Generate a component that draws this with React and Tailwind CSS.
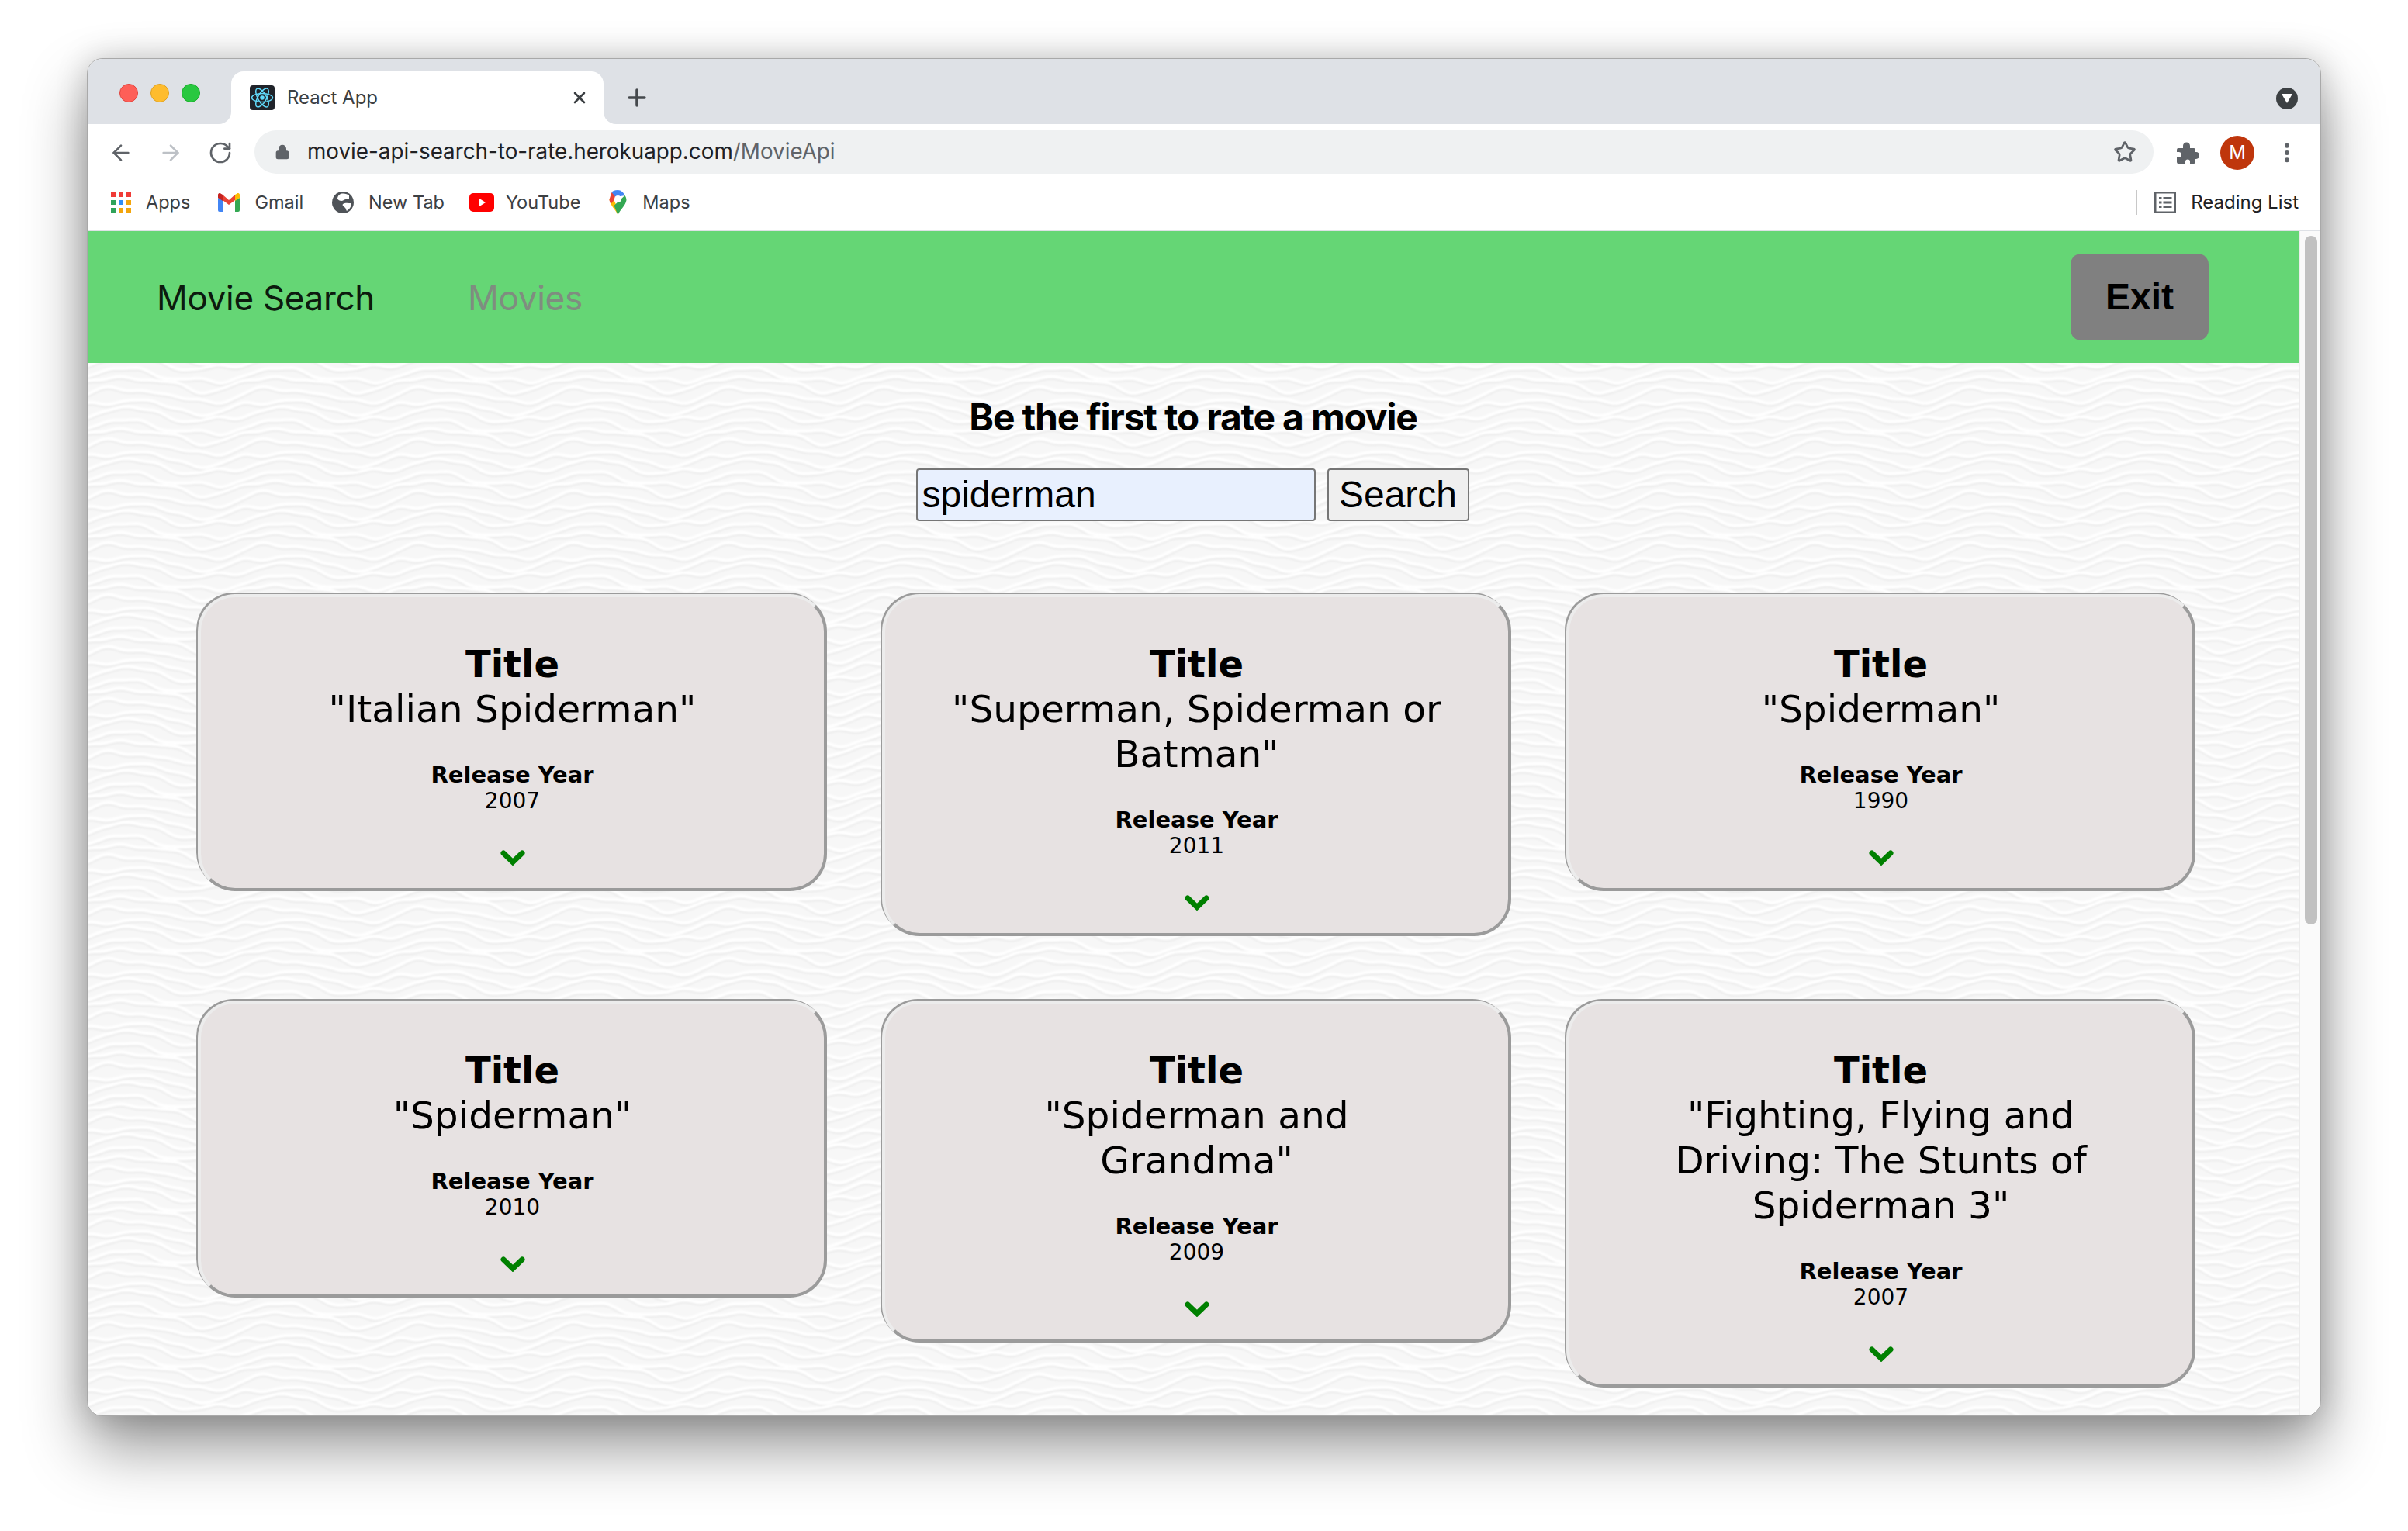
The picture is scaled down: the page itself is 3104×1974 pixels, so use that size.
import React, { useMemo } from "react";
import { ArrowLeft, ArrowRight, RotateCw, Plus, X, Star, Lock, MoreVertical } from "lucide-react";

const MOVIES = [
  ["Italian Spiderman", "2007"],
  ["Superman, Spiderman or Batman", "2011"],
  ["Spiderman", "1990"],
  ["Spiderman", "2010"],
  ["Spiderman and Grandma", "2009"],
  ["Fighting, Flying and Driving: The Stunts of Spiderman 3", "2007"],
];

function Waves() {
  const lines = useMemo(() => {
    const A = [0.3, 2.1, 4.0, 5.2, 1.2];
    const B = [1.7, 3.6, 0.5, 2.6, 4.9];
    const O = [0, 1.5, -1, 2, -1.5];
    const out = [];
    for (let i = -3; i < 9; i++) {
      const k = ((i % 5) + 5) % 5;
      let d = "";
      for (let x = -10; x <= 210; x += 4) {
        const t = (2 * Math.PI * (x - 50)) / 200;
        const v =
          -8.5 * Math.cos(t) +
          2.8 * Math.sin(2 * t + A[k]) +
          1.6 * Math.sin(3 * t + B[k]) +
          0.8 * Math.sin(5 * t + A[k] + B[k]);
        d += (x === -10 ? "M" : "L") + x + " " + (i * 13.4 + O[k] + v).toFixed(1);
      }
      out.push(d);
    }
    return out;
  }, []);
  return (
    <svg className="absolute inset-0 w-full h-full" aria-hidden="true">
      <defs>
        <filter id="soft" x="-10%" y="-10%" width="120%" height="120%">
          <feGaussianBlur stdDeviation="1" />
        </filter>
        <pattern id="waves" width="200" height="67" patternUnits="userSpaceOnUse" patternTransform="translate(0 10)">
          <rect width="200" height="67" fill="#f7f7f7" />
          <g fill="none" filter="url(#soft)">
            {lines.map((d, i) => (
              <g key={i}>
                <path d={d} stroke="#ebebeb" strokeWidth="2.5" transform="translate(0 3)" />
                <path d={d} stroke="#ffffff" strokeWidth="4" />
              </g>
            ))}
          </g>
        </pattern>
      </defs>
      <rect width="100%" height="100%" fill="url(#waves)" />
    </svg>
  );
}

function ReactIcon() {
  return (
    <svg viewBox="0 0 32 32" className="w-8 h-8 shrink-0">
      <rect width="32" height="32" rx="4" fill="#20232a" />
      <g fill="none" stroke="#61dafb" strokeWidth="1.5">
        <ellipse cx="16" cy="16" rx="13.5" ry="5.5" />
        <ellipse cx="16" cy="16" rx="13.5" ry="5.5" transform="rotate(60 16 16)" />
        <ellipse cx="16" cy="16" rx="13.5" ry="5.5" transform="rotate(120 16 16)" />
      </g>
      <circle cx="16" cy="16" r="2.8" fill="#61dafb" />
    </svg>
  );
}

function AppsIcon() {
  const c = ["#f03b37", "#f03b37", "#f03b37", "#2fa35a", "#2f8df5", "#f3a50c", "#2fa35a", "#f3a50c", "#f3a50c"];
  return (
    <div className="grid grid-cols-3 gap-1 w-[26px] h-[26px] shrink-0">
      {c.map((x, i) => (
        <svg key={i} viewBox="0 0 6 6" className="w-[6px] h-[6px]">
          <rect width="6" height="6" fill={x} />
        </svg>
      ))}
    </div>
  );
}

function GmailIcon() {
  return (
    <svg viewBox="0 0 28 24" className="w-7 h-6 shrink-0">
      <path d="M0 6 L0 22 a2 2 0 0 0 2 2 H6 V9 Z" fill="#4285f4" />
      <path d="M22 9 V24 H26 a2 2 0 0 0 2-2 V6 Z" fill="#34a853" />
      <path d="M6 9 L14 15 L22 9 V2 L14 9 L6 2 Z" fill="#ea4335" />
      <path d="M0 6 L6 10 V2 L3.500 0.400 A2.200 2.200 0 0 0 0 2.400 Z" fill="#c5221f" />
      <path d="M28 6 L22 10 V2 L24.500 0.400 A2.200 2.200 0 0 1 28 2.400 Z" fill="#fbbc04" />
    </svg>
  );
}

function GlobeIcon() {
  return (
    <svg viewBox="0 0 28 28" className="w-7 h-7 shrink-0">
      <circle cx="14" cy="14" r="14" fill="#4f5358" />
      <path d="M11 3 C15 2 20 3 22 5 L22 9 C20 11 17 9 15 11 C13 13 8 12 7 9 C7 6 9 4 11 3 Z" fill="#fff" />
      <path d="M14 16 C17 14 21 15 25 15 C25 19 23 22 19 25 C18 24 18 21 16 20 C14 19 13 17 14 16 Z" fill="#fff" />
    </svg>
  );
}

function YouTubeIcon() {
  return (
    <svg viewBox="0 0 32 24" className="w-8 h-6 shrink-0">
      <rect width="32" height="24" rx="5" fill="#f00" />
      <path d="M13 7 L21 12 L13 17 Z" fill="#fff" />
    </svg>
  );
}

function MapsIcon() {
  return (
    <svg viewBox="0 0 24 32" className="w-[25px] h-[32px] shrink-0">
      <path d="M12 32 C9 25 2 20 1 12 L7 13 L12 24 Z" fill="#fbbc04" />
      <path d="M12 32 C15 25 22 20 23 13 C23 11 22 8 21 7 L7 20 Z" fill="#34a853" />
      <path d="M4 3 L1 12 C1 14 2 16 3 18 L11 8 Z" fill="#ea4335" />
      <path d="M12 0 C8 0 5 1 4 3 L9 9 L21 7 C19 3 16 0 12 0 Z" fill="#4285f4" />
      <circle cx="12" cy="11.500" r="4.500" fill="#fff" />
    </svg>
  );
}

function PuzzleIcon() {
  return (
    <svg viewBox="0 0 28 28" className="w-7 h-7 shrink-0" fill="#5f6368">
      <path d="M2 8 H8 V5 A4.500 4.500 0 0 1 17 5 V8 H22 A2 2 0 0 1 24 10 V13 H25 A4.500 4.500 0 0 1 25 22 H24 V26 A2 2 0 0 1 22 28 H17 V25.500 A3 3 0 0 0 11 25.500 V28 H2 A2 2 0 0 1 0 26 V20 H2.500 A3.500 3.500 0 0 0 2.500 13 H0 V10 A2 2 0 0 1 2 8 Z" />
    </svg>
  );
}

function ReadingIcon() {
  return (
    <svg viewBox="0 0 28 28" className="w-7 h-7 shrink-0" fill="#5f6368">
      <path d="M0 0H28V28H0Z M2.500 2.500V25.500H25.500V2.500Z" fillRule="evenodd" />
      <rect x="6" y="7" width="3.500" height="3" />
      <rect x="11.500" y="7" width="11" height="3" />
      <rect x="6" y="12.500" width="3.500" height="3" />
      <rect x="11.500" y="12.500" width="11" height="3" />
      <rect x="6" y="18" width="3.500" height="3" />
      <rect x="11.500" y="18" width="11" height="3" />
    </svg>
  );
}

function Chevron() {
  return (
    <svg viewBox="0 0 32 20" className="w-8 h-5 shrink-0">
      <path d="M4 4 L16 15.500 L28 4" fill="none" stroke="#008000" strokeWidth="7" strokeLinecap="round" strokeLinejoin="miter" />
    </svg>
  );
}

function Bookmark({ icon, label }) {
  return (
    <div className="flex items-center gap-[19px]">
      {icon}
      <span className="text-[23.5px] text-[#3c4043] leading-none">{label}</span>
    </div>
  );
}

function Card({ title, year }) {
  return (
    <div className="bg-[#e7e2e2] rounded-[48px] border-4 border-t-[#ececec] border-l-[#ececec] border-r-[#9b9b9b] border-b-[#9b9b9b] shadow-[-2px_-2px_0_0_#9b9b9b] pt-[57px] pb-[29px] px-[76px] text-center text-black font-['DejaVu_Sans',sans-serif]">
      <div className="font-bold text-[48px] leading-[58px]">Title</div>
      <div className="text-[48.6px] leading-[58px]">"{title}"</div>
      <div className="mt-[39px] font-bold text-[29px] leading-[34px]">Release Year</div>
      <div className="text-[28px] leading-[34px]">{year}</div>
      <div className="flex justify-center items-center h-5 mt-[46px]">
        <Chevron />
      </div>
    </div>
  );
}

export default function App() {
  return (
    <div className="w-[3104px] h-[1974px] bg-white pt-[75px] pl-[112px] overflow-hidden font-['Inter',sans-serif]">
      <div className="w-[2880px] h-[1751px] rounded-[20px] flex flex-col overflow-hidden border border-[#a9a9a9] bg-white shadow-[0_40px_80px_rgba(0,0,0,0.42),0_0_40px_rgba(0,0,0,0.18)]">
        {/* Tab strip */}
        <div className="h-[84px] shrink-0 bg-[#dee1e6] flex items-end pl-[41px] pr-[29px]">
          <div className="flex gap-[16px] self-start mt-[32px] w-[144px] shrink-0">
            <span className="w-6 h-6 rounded-full bg-[#fe5f58] border border-[#e0443e]" />
            <span className="w-6 h-6 rounded-full bg-[#febc2e] border border-[#dea123]" />
            <span className="w-6 h-6 rounded-full bg-[#28c840] border border-[#1aab29]" />
          </div>
          <div className="relative w-[480px] h-[68px] bg-white rounded-t-[16px] flex items-center pl-[24px] pr-[19px] shrink-0">
            <span className="absolute -left-[16px] bottom-0 w-4 h-4 bg-white">
              <span className="block w-4 h-4 bg-[#dee1e6] rounded-br-[16px]" />
            </span>
            <span className="absolute -right-[16px] bottom-0 w-4 h-4 bg-white">
              <span className="block w-4 h-4 bg-[#dee1e6] rounded-bl-[16px]" />
            </span>
            <ReactIcon />
            <span className="ml-[16px] text-[24px] text-[#3c4043]">React App</span>
            <X className="ml-auto w-[24px] h-[24px] text-[#3c4043]" strokeWidth={2.6} />
          </div>
          <div className="self-end h-[68px] flex items-center ml-[26px]">
            <Plus className="w-[34px] h-[34px] text-[#45494d]" strokeWidth={2.5} />
          </div>
          <div className="ml-auto self-start mt-[37px] w-7 h-7 rounded-full bg-[#3c4043] flex items-center justify-center">
            <svg viewBox="0 0 14 12" className="w-[14px] h-3"><path d="M0 0H14L7 12Z" fill="#fff" /></svg>
          </div>
        </div>
        {/* Toolbar */}
        <div className="h-[72px] shrink-0 bg-white flex items-center pl-[27px] pr-[25px] pt-[1px]">
          <ArrowLeft className="w-8 h-8 text-[#5f6368] shrink-0" strokeWidth={2} />
          <ArrowRight className="w-8 h-8 text-[#bdc1c6] ml-[32px] shrink-0" strokeWidth={2} />
          <RotateCw className="w-8 h-8 text-[#5f6368] ml-[32px] shrink-0" strokeWidth={2} />
          <div className="ml-[28px] h-[56px] w-[2448px] rounded-full bg-[#eff1f2] flex items-center pl-[26px] pr-[22px] shrink-0 -mt-[1px]">
            <Lock className="w-5 h-5 text-[#5f6368] fill-[#5f6368] shrink-0" strokeWidth={2} />
            <span className="ml-[22px] text-[27.8px] text-[#202124] leading-none">
              movie-api-search-to-rate.herokuapp.com<span className="text-[#5f6368]">/MovieApi</span>
            </span>
            <Star className="ml-auto w-[30px] h-[30px] text-[#5f6368]" strokeWidth={2.2} />
          </div>
          <div className="ml-[30px]"><PuzzleIcon /></div>
          <div className="ml-[28px] w-[44px] h-[44px] rounded-full bg-[#bf360c] text-white text-[24px] flex items-center justify-center shrink-0">M</div>
          <MoreVertical className="ml-[26px] w-[32px] h-[32px] text-[#5f6368] fill-[#5f6368] shrink-0" strokeWidth={2.5} />
        </div>
        {/* Bookmarks */}
        <div className="h-[66px] shrink-0 bg-white flex items-center pl-[30px] pr-[28px] pb-[7px] border-b-2 border-[#dee1e6]">
          <div className="flex items-center">
            <Bookmark icon={<AppsIcon />} label="Apps" />
            <div className="ml-[36px]"><Bookmark icon={<GmailIcon />} label="Gmail" /></div>
            <div className="ml-[37px]"><Bookmark icon={<GlobeIcon />} label="New Tab" /></div>
            <div className="ml-[32px] [&>div]:gap-[15px]"><Bookmark icon={<YouTubeIcon />} label="YouTube" /></div>
            <div className="ml-[36px]"><Bookmark icon={<MapsIcon />} label="Maps" /></div>
          </div>
          <div className="ml-auto w-[2px] h-8 bg-[#c8c8c8]" />
          <div className="ml-[22px] flex items-center gap-[19px]">
            <ReadingIcon />
            <span className="text-[24px] text-[#202124] leading-none">Reading List</span>
          </div>
        </div>
        {/* Page */}
        <div className="flex-1 min-h-0 flex">
          <div className="relative w-[2850px] shrink-0 overflow-hidden">
            <Waves />
            <div className="relative">
              <nav className="h-[170px] bg-[#65d675] flex items-center pl-[89px] pr-[116px]">
                <span className="text-[44px] text-[#0c1a0e] leading-none tracking-[-0.3px] mt-[2px]">Movie Search</span>
                <span className="ml-[120px] text-[44px] text-[#7f8d80] leading-none tracking-[-0.3px] mt-[2px]">Movies</span>
                <div className="ml-auto w-[178px] h-[112px] rounded-[14px] bg-[#808080] flex items-center justify-center font-['Liberation_Sans',sans-serif] font-bold text-[48px] text-black">Exit</div>
              </nav>
              <h1 className="mt-[41px] text-center text-[48px] leading-[58px] font-bold text-black tracking-[-1.2px]">Be the first to rate a movie</h1>
              <div className="mt-[37px] flex justify-center gap-[15px] font-['Liberation_Sans',sans-serif] -translate-x-px">
                <div className="w-[515px] h-[68px] bg-[#e8f0fe] border-2 border-[#767676] rounded-[4px] flex items-center pl-[6px] text-[48px] text-black">spiderman</div>
                <div className="w-[183px] h-[68px] bg-[#efefef] border-2 border-[#767676] rounded-[4px] flex items-center justify-center text-[48px] text-black">Search</div>
              </div>
              <div className="mt-[94px] pl-[142px] grid grid-cols-[811px_811px_811px] gap-x-[71px] gap-y-[83px] items-start">
                {MOVIES.map(([t, y], i) => (
                  <Card key={i} title={t} year={y} />
                ))}
              </div>
            </div>
          </div>
          <div className="flex-1 bg-[#fafafa] border-l-2 border-[#ececec] pl-[6px] pt-[6px]">
            <div className="w-[16px] h-[888px] rounded-full bg-[#c1c1c1]" />
          </div>
        </div>
      </div>
    </div>
  );
}
